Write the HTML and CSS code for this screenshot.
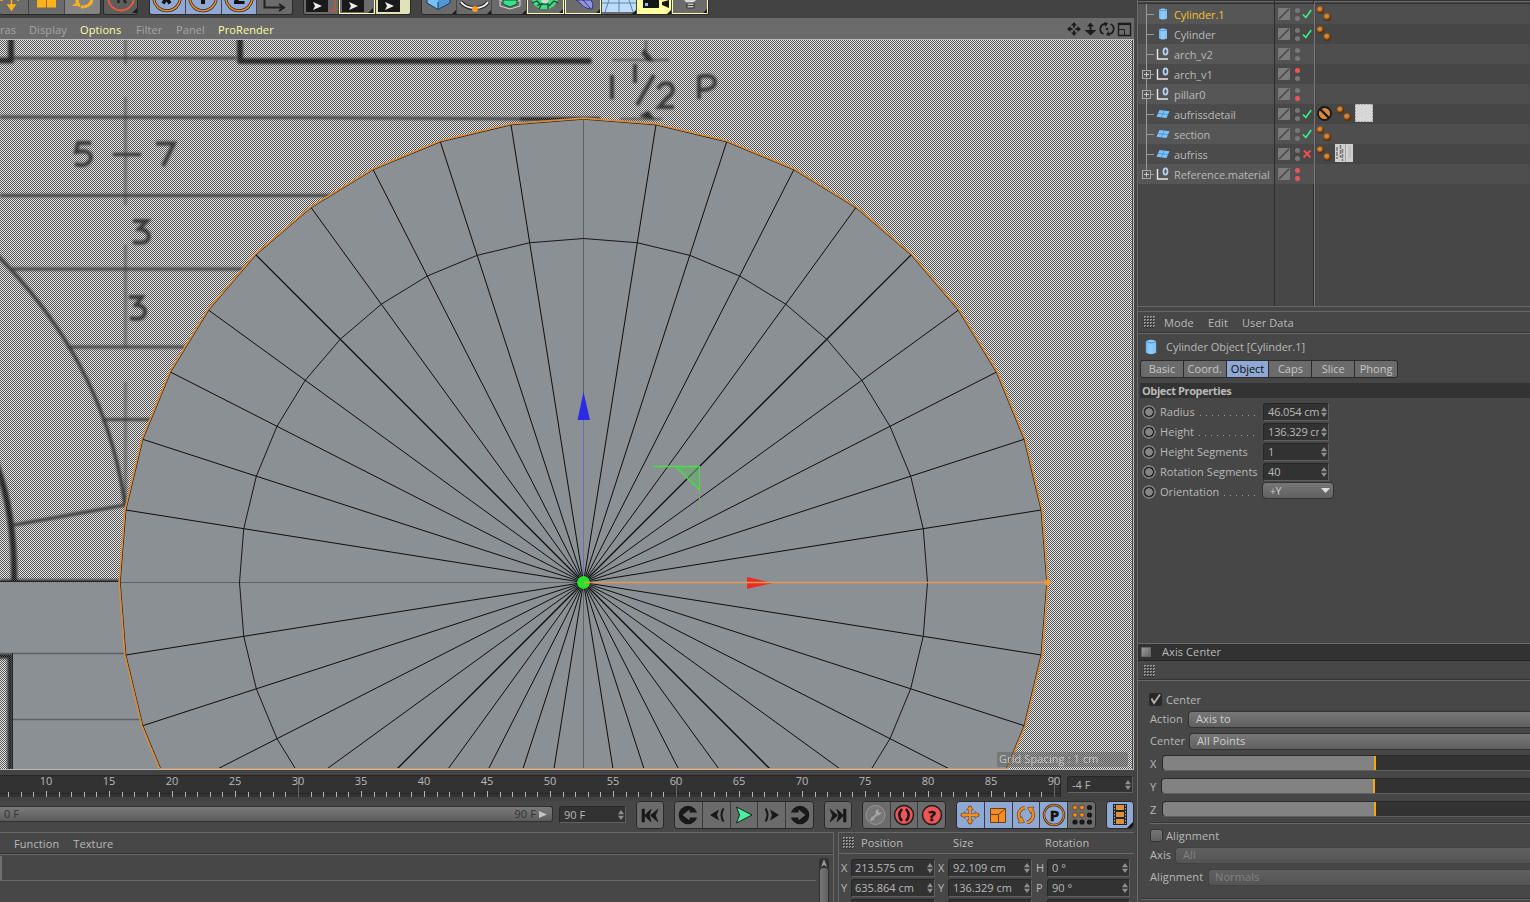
FILE: index.html
```html
<!DOCTYPE html>
<html lang="en">
<head>
<meta charset="utf-8">
<title>Cylinder.1</title>
<link rel="stylesheet" href="styles.css">
</head>
<body>
<svg class="defs" width="0" height="0">
  <defs>
    <linearGradient id="cyl" x1="0" x2="1"><stop offset="0" stop-color="#6fb4ee"/><stop offset=".4" stop-color="#93cdff"/><stop offset="1" stop-color="#7cc0f8"/></linearGradient>
    <radialGradient id="ball" cx=".4" cy=".35"><stop offset="0" stop-color="#e89848"/><stop offset=".6" stop-color="#bb6f22"/><stop offset="1" stop-color="#5a3210"/></radialGradient>
    <symbol id="i-cyl" viewBox="0 0 10 14"><path d="M1 2.500Q5 .3 9 2.500V11.500Q5 13.700 1 11.500Z" fill="url(#cyl)"/><path d="M1 2.800Q5 4.800 9 2.800" fill="none" stroke="#4c93cf" stroke-width=".8"/></symbol>
    <symbol id="i-null" viewBox="0 0 14 14"><path d="M1.500 2V12H12" fill="none" stroke="#e8e8e8" stroke-width="1.400"/><ellipse cx="9.500" cy="4.500" rx="2" ry="3.200" fill="none" stroke="#b4d6f8" stroke-width="1.700"/></symbol>
    <symbol id="i-plane" viewBox="0 0 14 10"><path d="M3.500 1L13.500 2.200L10.500 9L.5 7.800Z" fill="#7cc3ff"/><path d="M8.300 1.600L5.400 8.300M2 4.400L12 5.600" stroke="#4688bd" stroke-width=".7"/></symbol>
    <symbol id="i-balls" viewBox="0 0 16 16"><circle cx="4.500" cy="4" r="3.700" fill="url(#ball)"/><circle cx="11.400" cy="11.200" r="3.900" fill="url(#ball)"/></symbol>
    <symbol id="i-check" viewBox="0 0 10 10"><path d="M1 5.500L3.800 8.500L9.200 1" fill="none" stroke="#3cf08c" stroke-width="1.500"/></symbol>
    <symbol id="i-cross" viewBox="0 0 10 10"><path d="M2 1.500L8.500 8.500M8.500 1.500L1.500 8.500" fill="none" stroke="#ee4f4f" stroke-width="1.900"/></symbol>
    <symbol id="i-spin" viewBox="0 0 6 10"><path d="M3 0L6 4.300H0ZM3 10L6 5.700H0Z" fill="#8f8f8f"/></symbol>
    <symbol id="i-x" viewBox="0 0 36 14"><circle cx="17" cy="-2.500" r="13.300" fill="none" stroke="#2a2a2a" stroke-width="3"/><circle cx="17" cy="-2.500" r="13.300" fill="none" stroke="#ee8a25" stroke-width="1.500"/></symbol>
    <symbol id="i-clap" viewBox="0 0 36 14"><path d="M2 0H24V12H2Z" fill="#191919"/><path d="M9 2L18 6L9 10L11 6Z" fill="#eee"/></symbol>
    <pattern id="dither" width="2" height="2" patternUnits="userSpaceOnUse"><path d="M0 0h1v1h-1zM1 1h1v1h-1z" fill="#505050" shape-rendering="crispEdges"/></pattern>
    <filter id="soft" x="-5%" y="-5%" width="110%" height="110%"><feGaussianBlur stdDeviation="1.1"/></filter>
  </defs>
</svg>
<div class="app">
  <main class="left">
    <div class="toolbar">
      <div class="group g1">
        <span class="tb w28"><svg width="28" height="14"><path d="M11.500 0V5H8L11.500 10L15 5H11.500M3 0H0M19 0H17" fill="#ffb21c" stroke="#ffb21c" stroke-width="1.500"/></svg></span>
        <span class="tb"><svg width="36" height="14"><path d="M8 0H27V7.500H8Z" fill="#ffb21c"/><path d="M17.500 0V8" stroke="#a06a00"/></svg></span>
        <span class="tb hi"><svg width="36" height="14"><path d="M12 0Q12 4 15 6M27 0C26 5 21 7 16 7" fill="none" stroke="#ffb21c" stroke-width="3"/><path d="M7 6H14V0Z" fill="#ffb21c"/></svg></span>
      </div>
      <div class="group g2"><span class="tb dk"><svg width="34" height="14"><circle cx="17" cy="-2.500" r="13" fill="none" stroke="#ee5a38" stroke-width="1.800"/><path d="M14.500 0V3M20 0L22 3" stroke="#222" stroke-width="2.500"/><path d="M33 8V13H28Z" fill="#1c1c1c"/></svg></span></div>
      <div class="group g3">
        <span class="tb blue"><svg width="35" height="14"><use href="#i-x" width="36" height="14"/><path d="M13 3.500L16.500 -2L20 3.500" fill="none" stroke="#111" stroke-width="3.500"/></svg></span>
        <span class="tb blue"><svg width="36" height="14"><use href="#i-x" width="36" height="14"/><path d="M17 0V4" stroke="#111" stroke-width="4"/></svg></span>
        <span class="tb blue"><svg width="36" height="14"><use href="#i-x" width="36" height="14"/><path d="M12 2.500H22.500M13 2L17 -2" stroke="#111" stroke-width="3"/></svg></span>
        <span class="tb"><svg width="36" height="14"><path d="M7.500 0V7.500H27M22 4L27 7.500L22 11" fill="none" stroke="#222" stroke-width="2"/></svg></span>
      </div>
      <div class="group g4">
        <span class="tb"><svg width="34" height="14"><use href="#i-clap" width="36" height="14"/><path d="M25 11H31V0" fill="none" stroke="#ba5840" stroke-width="1.500"/></svg></span>
        <span class="tb cream"><svg width="34" height="14"><use href="#i-clap" width="36" height="14"/><path d="M33 8V13H28Z" fill="#1c1c1c"/></svg></span>
        <span class="tb pale"><svg width="36" height="14"><use href="#i-clap" width="36" height="14"/></svg></span>
      </div>
      <div class="group g5">
        <span class="tb tri"><svg width="35" height="14"><path d="M5 0H28V3L16 9.500L5 3Z" fill="#79c0f6"/><path d="M16 0V9.500L28 3V0Z" fill="#5298d6"/><path d="M5 0V3L16 9.500L28 3V0M16 2V9" fill="none" stroke="#143d60"/></svg></span>
        <span class="tb tri"><svg width="36" height="14"><path d="M4 2C10 10 26 10 31 2" fill="none" stroke="#222" stroke-width="4"/><path d="M4 2C10 10 26 10 31 2" fill="none" stroke="#f3f3f3" stroke-width="2"/><circle cx="18" cy="9" r="3" fill="#ff9420"/></svg></span>
        <span class="tb tri"><svg width="36" height="14"><path d="M8 0L18 5.500L28 0V6L18 9L8 6Z" fill="none" stroke="#d8d8d8"/><path d="M11 0H25V4L18 7L11 4Z" fill="#3ce08a" stroke="#145332"/></svg></span>
        <span class="tb tri cream"><svg width="34" height="14"><path d="M4 0H30L26 6L21 9H12L7 6Z" fill="#40dd88"/><path d="M4 3L9 1L13 5L11 9M13 4H20V9M21 6L26 1L30 3M9 6L12 4" fill="none" stroke="#174a2d" stroke-width="1.300"/><circle cx="17" cy="0" r="3.500" fill="#cfd8d2"/></svg></span>
        <span class="tb tri cream"><svg width="34" height="14"><path d="M10 0H25L27 4L26 9C20 9 17 6 14 3Z" fill="#9096e6" stroke="#30346c"/><path d="M17 0L24 8" stroke="#30346c"/></svg></span>
        <span class="tb tri"><svg width="36" height="14"><path d="M0 0H34V12H0Z" fill="#bcdcfb"/><path d="M17 0V12M0 3H34M7 0L3 12M27 0L31 12" fill="none" stroke="#5f84a8"/></svg></span>
        <span class="tb tri lemon"><svg width="35" height="14"><path d="M6 0H22V8H6ZM25 2L32 0V8L25 5Z" fill="#151515"/><path d="M8 3H11V6H8Z" fill="#8fc4f6"/></svg></span>
        <span class="tb tri cream"><svg width="34" height="14"><path d="M11 0H23L20 3H14Z" fill="#d8d8d8"/><path d="M14 3H21V8H14Z" fill="#c2c2c2" stroke="#333"/><path d="M14 5.500H21" stroke="#444"/></svg></span>
      </div>
    </div>
    <nav class="viewmenu">
      <span class="m0">ras</span><span class="m1">Display</span><span class="m2 on">Options</span><span class="m3">Filter</span><span class="m4">Panel</span><span class="m5 on">ProRender</span>
      <svg class="nav" width="66" height="16" viewBox="0 0 66 16">
        <path d="M7 0L10 3.500H8V5.500H6V3.500H4ZM7 14L10 10.500H8V8.500H6V10.500H4ZM0 7L3.500 4V6H5.500V8H3.500V10ZM14 7L10.500 4V6H8.500V8H10.500V10Z" fill="#1c1c1c"/>
        <path d="M23.500 0.500L27 4.500H24.500V8H29.500L23.500 13.500L17.500 8H22.500V4.500H20Z" fill="#1c1c1c"/>
        <path d="M36.500 12A5.200 5.200 0 0 1 38.500 2M43.500 2A5.200 5.200 0 0 1 41.500 12" fill="none" stroke="#1c1c1c" stroke-width="1.800"/><path d="M37 0L41 1L38.500 5ZM43 14L39 13L41.500 9Z" fill="#1c1c1c"/><circle cx="40" cy="7" r="1.300" fill="#1c1c1c"/>
        <path d="M51.500 1.500H63.500V13.500H51.500Z" fill="none" stroke="#1c1c1c" stroke-width="1.400"/><path d="M51 2H64" stroke="#1c1c1c" stroke-width="2.200"/><path d="M51.500 7.500H57.500V13.500" fill="none" stroke="#1c1c1c"/>
      </svg>
    </nav>
    <div class="viewport">
      <svg width="1132" height="729" viewBox="0 40 1132 729">
        <rect y="40" width="1132" height="729" fill="#e9e9e9"/>
        <g filter="url(#soft)" fill="none" stroke="#282828">
          <path d="M0 60.500H11V36M240 36V61H589" stroke="#101010" stroke-width="6" stroke-linecap="round" stroke-linejoin="round"/>
          <path d="M14 58H236M0 117L300 117.500L560 119M0 195.500H335M10 269H245M67 347H185M102 419.500H152" stroke-width="3" opacity=".9"/>
          <path d="M520 119H600" stroke="#111" stroke-width="4"/>
          <path d="M125.500 36V64M125.500 97V205M125.500 245V346M125.500 382V505" stroke-width="3" opacity=".5"/>
          <path d="M-10 248Q105 360 125 505L14 525" stroke-width="3.300"/>
          <path d="M-14 440Q16 500 14 585" stroke="#101010" stroke-width="6"/>
          <path d="M0 581H122" stroke="#111" stroke-width="3"/>
          <path d="M113 154.500H141" stroke-width="3.400"/>
          <path d="M91 143H78L76 152Q91 149 91 158Q88 168 75 164M156 143.500H174L163 166M133 221H147L139 229Q149 230 149 237Q147 245 133 242M129 297H142L136 305Q146 306 145 313Q143 321 130 318" stroke-width="4"/>
          <path d="M612 75V99M635 64V83M654 75L637 105M658 89Q662 81 670 84Q677 91 667 98L659 107H674M699 99V77Q715 73 715 83Q714 90 699 90" stroke-width="4"/>
          <path d="M612 60H669M646 40V60M620 119H662" stroke-width="2" opacity=".7"/><path d="M644 49L654 61H648L642 54ZM640 116L648 111L655 120Z" fill="#151515"/>
          <path d="M-5 656H10V775" stroke="#111" stroke-width="5"/>
        </g>
        <rect y="40" width="1132" height="729" fill="url(#dither)"/>
        <path d="M0 582H122L144 725L162 780H12.500V653.500H0Z" fill="#8b9095"/>
        <path d="M0 653.500H126M12.500 719.500H142" stroke="#5d6164" stroke-width="1.500" fill="none"/>
        <path d="M0 581.500H120M12.500 653V769" stroke="#1f2122" fill="none"/>
        <g id="disc"></g>
      </svg>
      <span class="spacing">Grid Spacing : 1 cm</span>
    </div>
    <section class="timeline">
      <svg class="ruler" width="1061" height="22" id="ruler"></svg>
      <div class="field f66"><span>-4 F</span><svg class="spin"><use href="#i-spin"/></svg></div>
    </section>
    <section class="transport">
      <div class="range"><span>0 F</span><span class="end">90 F</span><svg width="10" height="9"><path d="M1 1L9 4.500L1 8Z" fill="#c4c4c4"/></svg></div>
      <div class="field f67"><span>90 F</span><svg class="spin"><use href="#i-spin"/></svg></div>
      <div class="btns b1"><i><svg width="26" height="26"><path d="M5 7H7.500V20H5ZM7.500 13.500L14 7L12.500 13.500L14 20ZM13.500 13.500L21 7L18.500 13.500L21 20Z" fill="#181818" stroke="#181818" stroke-width=".6"/></svg></i></div>
      <div class="btns b2">
        <i><svg width="26" height="26"><circle cx="13" cy="13" r="9.300" fill="#181818"/><path d="M7.500 13L14.500 7.500V10.500H24V15.500H14.500V18.500Z" fill="#6b6b6b"/></svg></i>
        <i><svg width="26" height="26"><path d="M7 13L16 7.500L14 13L16 18.500Z" fill="#181818"/><path d="M20.500 6.500Q16.500 13 20.500 19.500" fill="none" stroke="#181818" stroke-width="2"/></svg></i>
        <i><svg width="26" height="26"><path d="M5.500 5L21 13L5.500 21L8.500 13Z" fill="#4af09a" stroke="#202020"/></svg></i>
        <i><svg width="26" height="26"><path d="M20 13L11 7.500L13 13L11 18.500Z" fill="#181818"/><path d="M6.500 6.500Q10.500 13 6.500 19.500" fill="none" stroke="#181818" stroke-width="2"/></svg></i>
        <i><svg width="26" height="26"><circle cx="13" cy="13" r="9.300" fill="#181818"/><path d="M18.500 13L11.500 7.500V10.500H2V15.500H11.500V18.500Z" fill="#6b6b6b"/></svg></i>
      </div>
      <div class="btns b3"><i><svg width="26" height="26"><path d="M21 7H18.500V20H21ZM18.500 13.500L12 7L13.500 13.500L12 20ZM12.500 13.500L5 7L7.500 13.500L5 20Z" fill="#181818" stroke="#181818" stroke-width=".6"/></svg></i></div>
      <div class="btns b4">
        <i><svg width="26" height="26"><circle cx="12.500" cy="13" r="9.500" fill="#777" stroke="#979797"/><path d="M12.500 9.500L15 6.500L15.500 10.500L19 10.500L16 13.500L13 13Z" fill="#a8a8a8"/><path d="M14 12L7.500 18.500M8.500 15L11 18" stroke="#a4a4a4" stroke-width="1.800"/></svg></i>
        <i><svg width="26" height="26"><circle cx="13" cy="13" r="9.500" fill="#ee5556" stroke="#1d1d1d" stroke-width="1.500"/><path d="M11 7Q5.500 13 11 19M15 7Q20.500 13 15 19" fill="none" stroke="#181818" stroke-width="2.500"/></svg></i>
        <i><svg width="26" height="26"><circle cx="13" cy="13" r="9.500" fill="#ee5556" stroke="#1d1d1d" stroke-width="1.500"/><text x="13" y="18.500" text-anchor="middle" class="ic">?</text></svg></i>
      </div>
      <div class="btns b5">
        <i class="bl"><svg width="26" height="26"><path d="M13 4V22M4 13H22" stroke="#63401c" stroke-width="3"/><path d="M13 3.500L16.500 8H9.500ZM13 22.500L16.500 18H9.500ZM3.500 13L8 9.500V16.500ZM22.500 13L18 9.500V16.500Z" fill="#f58d22" stroke="#63401c" stroke-width=".6"/><path d="M13 5V21M5 13H21" stroke="#f58d22" stroke-width="2"/></svg></i>
        <i class="bl"><svg width="26" height="26"><path d="M5.500 6.500H20.500V20.500H5.500Z" fill="#f58d22" stroke="#63401c"/><path d="M5.500 12.500H13.500V20.500M13.500 12.500L20 7" fill="none" stroke="#63401c"/></svg></i>
        <i class="bl"><svg width="26" height="26"><path d="M8 18.500A7.500 7.500 0 0 1 12 5.700M18 7.500A7.500 7.500 0 0 1 14 20.300" fill="none" stroke="#63401c" stroke-width="3.500"/><path d="M5 21L11.500 20.500L8.500 14.500ZM21 5L14.500 5.500L17.500 11.500Z" fill="#f58d22" stroke="#63401c" stroke-width=".6"/><path d="M8 18.500A7.500 7.500 0 0 1 12 5.700M18 7.500A7.500 7.500 0 0 1 14 20.300" fill="none" stroke="#f58d22" stroke-width="2.200"/></svg></i>
        <i class="bl"><svg width="26" height="26"><circle cx="13" cy="13" r="10" fill="none" stroke="#453522" stroke-width="2.500"/><circle cx="13" cy="13" r="10" fill="none" stroke="#ee8a25" stroke-width="1"/><text x="13.500" y="18.500" text-anchor="middle" class="ic">P</text></svg></i>
        <i><svg width="26" height="26" fill="#171717"><g fill="#f58d22" stroke="#4a2a08" stroke-width=".6"><circle cx="6" cy="5.500" r="2.300"/><circle cx="13" cy="5.500" r="2.300"/><circle cx="6" cy="13" r="2.300"/><circle cx="13" cy="13" r="2.300"/></g><circle cx="20.500" cy="5.500" r="2.600"/><circle cx="20.500" cy="13" r="2.600"/><circle cx="6" cy="20" r="2.600"/><circle cx="13" cy="20" r="2.600"/><circle cx="20.500" cy="20" r="2.600"/></svg></i>
      </div>
      <div class="btns b6"><i class="bl"><svg width="26" height="26"><path d="M6 2H20V23H6Z" fill="#27231d"/><path d="M9 3H17V8H9ZM9 10H17V15H9ZM9 17H17V22H9Z" fill="#dc8f3c"/><path d="M7.500 3V22M18.500 3V22" stroke="#8ea9d4" stroke-dasharray="1.500 1.500"/><path d="M26 20V26H20Z" fill="#111"/></svg></i></div>
    </section>
    <div class="bottom">
      <section class="materials">
        <nav><span>Function</span><span>Texture</span></nav>
        <div class="matbody"><div class="strip"></div><div class="scroll"><svg width="10" height="10"><path d="M5 1L8 9L5 7L2 9Z" fill="#999"/></svg><b></b></div></div>
      </section>
      <section class="coords">
        <header><span class="grip"></span><span class="c1">Position</span><span class="c2">Size</span><span class="c3">Rotation</span></header>
        <div class="crow"><em>X</em><div class="field"><span>213.575 cm</span><svg class="spin"><use href="#i-spin"/></svg></div><em>X</em><div class="field"><span>92.109 cm</span><svg class="spin"><use href="#i-spin"/></svg></div><em>H</em><div class="field"><span>0 °</span><svg class="spin"><use href="#i-spin"/></svg></div></div>
        <div class="crow"><em>Y</em><div class="field"><span>635.864 cm</span><svg class="spin"><use href="#i-spin"/></svg></div><em>Y</em><div class="field"><span>136.329 cm</span><svg class="spin"><use href="#i-spin"/></svg></div><em>P</em><div class="field"><span>90 °</span><svg class="spin"><use href="#i-spin"/></svg></div></div>
        <div class="crow"><em></em><div class="field"></div><em></em><div class="field"></div><em></em><div class="field"></div></div>
      </section>
    </div>
  </main>
  <aside class="right">
    <section class="objects" id="objects"></section>
    <section class="attrs">
      <nav><span class="grip"></span><span class="n1">Mode</span><span class="n2">Edit</span><span class="n3">User Data</span></nav>
      <div class="title"><svg width="14" height="18"><use href="#i-cyl" width="14" height="18"/></svg><span>Cylinder Object [Cylinder.1]</span></div>
      <div class="tabs"><span>Basic</span><span>Coord.</span><span class="sel">Object</span><span>Caps</span><span>Slice</span><span>Phong</span></div>
      <h3>Object Properties</h3>
      <div class="prop"><i></i><label>Radius<u></u></label><div class="field"><span>46.054 cm</span><svg class="spin"><use href="#i-spin"/></svg></div></div>
      <div class="prop"><i></i><label>Height<u></u></label><div class="field"><span class="cut">136.329 cm</span><svg class="spin"><use href="#i-spin"/></svg></div></div>
      <div class="prop"><i></i><label>Height Segments</label><div class="field"><span>1</span><svg class="spin"><use href="#i-spin"/></svg></div></div>
      <div class="prop"><i></i><label>Rotation Segments</label><div class="field"><span>40</span><svg class="spin"><use href="#i-spin"/></svg></div></div>
      <div class="prop"><i></i><label>Orientation<u></u></label><div class="drop small"><span>+Y</span><svg width="9" height="5"><path d="M0 0H9L4.500 5Z" fill="#ddd"/></svg></div></div>
    </section>
    <section class="axis">
      <header><b></b>Axis Center</header>
      <div class="gripbar"><span class="grip"></span></div>
      <div class="chk"><svg width="13" height="13"><rect width="13" height="13" rx="2" fill="#282828"/><path d="M2.500 5.500L5 10L11 1.500" fill="none" stroke="#b4b4b4" stroke-width="1.800"/></svg>Center</div>
      <div class="line a1"><label>Action</label><div class="drop">Axis to</div></div>
      <div class="line a2"><label>Center</label><div class="drop">All Points</div></div>
      <div class="line sl"><label>X</label><div class="slider"><b></b></div></div>
      <div class="line sl y"><label>Y</label><div class="slider"><b></b></div></div>
      <div class="line sl"><label>Z</label><div class="slider"><b></b></div></div>
      <hr>
      <div class="chk al"><b></b>Alignment</div>
      <div class="line a3"><label>Axis</label><div class="drop off">All</div></div>
      <div class="line a4"><label>Alignment</label><div class="drop off">Normals</div></div>
      <hr class="last">
    </section>
  </aside>
</div>
<script src="app.js"></script>
</body>
</html>
```
FILE: styles.css
```css
* { box-sizing: border-box; }
body { margin: 0; width: 1530px; height: 902px; overflow: hidden; background: #474747; font: 11px/14px "Open Sans", "Noto Sans", sans-serif; color: #b9b9b9; letter-spacing: .1px; }
svg { display: block; flex: none; }
.defs { position: absolute; }
i, em { font-style: normal; }
span, label { white-space: nowrap; }
.app { display: grid; grid-template-columns: 1137px 393px; height: 902px; }
.left { display: flex; flex-direction: column; min-width: 0; height: 902px; overflow: hidden; }

.toolbar { height: 18px; display: flex; align-items: flex-start; background: #434343; }
.group { display: flex; height: 15px; border: 1px solid #292929; border-top: 0; border-radius: 0 0 3px 3px; gap: 1px; background: #454545; overflow: hidden; }
.tb { position: relative; display: block; height: 14px; background: #6b6b6b; overflow: hidden; flex: 1 1 0; }
.g1 { width: 101px; border-left: 0; } .tb.w28 { flex: 0 0 28px; }
.g2 { width: 35px; margin-left: 2px; } .g3 { width: 144px; margin-left: 11px; }
.g4 { width: 108px; margin-left: 10px; } .g5 { width: 288px; margin-left: 10px; }
.tb.hi { background: #838383; } .tb.dk { background: #5d5d5d; } .tb.blue { background: #8fa9d4; }
.tb.pale { background: #e2e2b8; } .tb.lemon { background: #ffffa0; }
.tb.cream { border: 1px solid #ffffb0; border-top: 0; }
.tb.tri::after { content: ""; position: absolute; right: 0; bottom: 0; border: 2.5px solid; border-color: transparent #1b1b1b #1b1b1b transparent; }

.viewmenu { height: 21px; margin-right: 3px; display: flex; align-items: center; background: #6b6b6b; color: #a6a6a6; padding: 3px 1px 0 0; letter-spacing: .1px; }
.viewmenu .on { color: #ffffa4; }
.m0 { width: 29px; } .m1 { width: 51px; } .m2 { width: 56px; } .m3 { width: 40px; } .m4 { width: 42px; }
.viewmenu .nav { margin-left: auto; }
.viewport { position: relative; height: 731px; width: 1134px; border: solid #b9b9b9; border-width: 1px 1px 1px 0; overflow: hidden; }
.spacing { position: absolute; right: 5px; bottom: 2px; width: 131px; height: 15px; padding-left: 2px; border-radius: 2px; background: rgba(100,100,100,.55); color: #c6c6c6; }

.timeline { display: flex; height: 31px; padding-top: 5px; gap: 6px; background: #434343; }
.ruler { background: #323232; border-right: 1px solid #222; overflow: visible; }
.ruler text { fill: #b9b9b9; letter-spacing: 0; }
.field { position: relative; display: flex; align-items: center; height: 17px; background: #323232; border: solid #272727; border-width: 1px; border-right-color: #606060; border-bottom-color: #606060; border-radius: 3px 0 0 0; padding: 0 1px 0 5px; overflow: hidden; letter-spacing: 0; }
.field span { flex: 1; overflow: hidden; }
.field .cut { margin-right: 2px; }
.spin { width: 6px; height: 10px; }
.f66 { width: 66px; margin-top: 1px; padding-left: 4px; }
.transport { display: flex; align-items: flex-start; height: 31px; }
.range { display: flex; align-items: center; width: 553px; height: 16px; margin-top: 5px; padding: 0 4px 0 4px; border: 1px solid #303030; border-left: 0; border-radius: 0 3px 3px 0; background: linear-gradient(#7a7a7a, #5c5c5c); color: #343434; }
.range .end { margin-left: auto; margin-right: 2px; }
.f67 { width: 67px; margin: 5px 0 0 6px; padding-left: 4px; }
.btns { display: flex; gap: 1px; height: 28px; background: #3b3b3b; border: 1px solid #292929; border-radius: 4px; overflow: hidden; }
.btns i { flex: 1; display: flex; justify-content: center; background: #6b6b6b; }
.btns .bl { background: #8fa9d4; }
.b1 { width: 28px; margin-left: 10px; } .b2 { width: 140px; margin-left: 10px; } .b3 { width: 28px; margin-left: 10px; }
.b4 { width: 84px; margin-left: 10px; } .b5 { width: 140px; margin-left: 10px; } .b6 { width: 28px; margin-left: 10px; }
.ic { font: bold 15px "Open Sans", sans-serif; fill: #111; letter-spacing: 0; stroke: #111; stroke-width: .6px; }

.bottom { display: flex; gap: 4px; height: 70px; }
.materials { width: 834px; border-top: 1px solid #686868; border-right: 1px solid #686868; }
.materials nav { display: flex; gap: 14px; height: 22px; padding: 4px 0 0 14px; border-bottom: 1px solid #686868; box-shadow: 0 -1px #333 inset; }
.matbody { display: flex; justify-content: space-between; height: 47px; padding: 1px 4px 0 0; }
.strip { width: 816px; height: 25px; border-left: 2px solid #6f6f6f; border-bottom: 1px solid #686868; }
.scroll { width: 10px; margin-top: 2px; background: #303030; border-radius: 4px 4px 0 0; }
.scroll b { display: block; width: 8px; margin-left: 1px; height: 40px; background: linear-gradient(90deg, #777, #606060); border-radius: 3px 3px 0 0; }
.coords { width: 296px; border-top: 1px solid #686868; border-left: 1px solid #686868; }
.coords header { display: flex; height: 21px; padding: 3px 0 0 3px; border-bottom: 1px solid #686868; margin-bottom: 5px; }
.grip { width: 12px; height: 12px; background: conic-gradient(#999 25%, #474747 0 50%, #303030 0 75%, #474747 0) 0 0 / 3px 3px; }
.coords header .grip { margin-top: 1px; }
.c1 { margin-left: 7px; width: 92px; } .c2 { width: 92px; }
.crow { display: grid; grid-template-columns: 12px 84px 13px 84px 15px 83px; height: 20px; align-items: start; }
.crow em { padding: 2px 0 0 2px; } .crow em:nth-child(3) { padding-left: 3px; } .crow em:nth-child(5) { padding-left: 4px; }
.crow .field { height: 18px; padding-left: 3px; }
.crow .field:nth-child(4) { padding-left: 4px; } .crow .field:nth-child(6) { padding-left: 4px; }

.right { display: flex; flex-direction: column; height: 902px; overflow: hidden; background: #474747; border-left: 1px solid #686868; }
.objects { height: 307px; border-top: 1px solid #333; padding-top: 3px; border-bottom: 1px solid #686868; background: linear-gradient(90deg, transparent 136px, #2c2c2c 136px 137px, transparent 137px 175px, #2c2c2c 175px 176px, #777 176px 177px, transparent 177px), linear-gradient(#686868 0 1px, #474747 1px 2px, #303030 2px 3px, transparent 3px); }
.orow { display: grid; grid-template-columns: 136px 39px 214px; column-gap: 1px; height: 20px; }
.orow .oname { display: flex; align-items: center; background: #4b4b4b; }
.orow .oflag { display: flex; align-items: center; background: #484848; padding-left: 3px; }
.orow .otags { display: flex; align-items: center; background: #464646; margin-left: 1px; }
.orow:nth-child(odd) .oname { background: #565656; } .orow:nth-child(odd) .oflag { background: #525252; } .orow:nth-child(odd) .otags { background: #4e4e4e; }
.oname span { padding-top: 2px; margin-left: 4px; letter-spacing: -.08px; }
.oname .yel { color: #f5c02c; }

.attrs { height: 332px; margin-top: 4px; border-top: 1px solid #686868; }
.attrs nav { display: flex; height: 22px; padding: 4px 0 0 5px; border-bottom: 1px solid #686868; box-shadow: 0 -1px #333 inset; }
.n1 { margin-left: 9px; width: 44px; } .n2 { width: 34px; }
.title { display: flex; align-items: center; height: 26px; padding-left: 6px; gap: 8px; }
.title span { letter-spacing: -.03px; }
.tabs { display: flex; width: 258px; height: 18px; margin: 0 0 5px 2px; border: 1px solid #2b2b2b; border-radius: 3px; background: #2b2b2b; gap: 1px; overflow: hidden; }
.tabs span { flex: 1 1 0; text-align: center; background: #6b6b6b; color: #c6c6c6; line-height: 16px; letter-spacing: 0; }
.tabs .sel { background: #8fa9d4; color: #0a0a0a; }
.attrs h3 { margin: 0 0 4px 2px; padding-left: 2px; height: 15px; background: #333; font-size: 11px; line-height: 16px; letter-spacing: -.4px; }
.prop { display: flex; align-items: flex-start; height: 20px; padding-left: 4px; }
.prop i { flex: none; width: 14px; height: 14px; margin-top: 3px; border-radius: 50%; background: radial-gradient(circle, #858585 0 3.5px, #262626 4px 5px, #7c7c7c 5.6px 6.6px, #555 7px); }
.prop label { flex: none; display: flex; width: 107px; padding: 3px 8px 0 4px; letter-spacing: .05px; }
.prop u { flex: 1; margin: 0 0 3px 5px; background: repeating-linear-gradient(90deg, #999 0 1px, transparent 1px 6px) 0 100% / 100% 1px no-repeat; }
.prop .field { width: 66px; margin-top: 1px; padding: 0 1px 0 4px; height: 18px; letter-spacing: -.15px; }
.drop { display: flex; align-items: center; height: 17px; padding-left: 6px; border: 1px solid #333; border-radius: 4px; background: linear-gradient(#777, #606060); color: #cfcfcf; }
.small { justify-content: space-between; width: 72px; padding: 0 3px 0 7px; margin-left: -1px; }
.small span { font-size: 10px; }

.axis { border-top: 1px solid #686868; flex: 1; }
.axis header { display: flex; height: 17px; align-items: center; background: #323232; border-bottom: 1px solid #262626; padding-left: 3px; gap: 11px; }
.axis header b { width: 10px; height: 10px; background: linear-gradient(135deg, #999, #666); border: 1px solid #666; }
.gripbar { height: 20px; border-bottom: 1px solid #686868; padding: 4px 0 0 5px; box-shadow: 0 -1px #333 inset; }
.gripbar .grip { display: block; }
.chk { display: flex; align-items: center; height: 15px; gap: 4px; margin: 11px 0 3px 11px; }
.chk b { width: 13px; height: 13px; border-radius: 3px; border: 1px solid #353535; background: linear-gradient(#757575, #606060); }
.line { display: flex; align-items: center; padding-left: 12px; height: 18px; }
.line .drop, .slider { flex: 1; border-right: 0; border-radius: 4px 0 0 4px; }
.a1 { margin-bottom: 4px; } .a2 { margin-bottom: 3px; }
.a1 label { width: 38px; } .a1 .drop { padding-left: 7px; } .a2 label { width: 39px; } .a2 .drop { padding-left: 7px; } .a3 label { width: 25px; } .a4 label { width: 58px; }
.sl { height: 19px; margin-bottom: 4px; } .sl label { width: 12px; padding-top: 2px; } .sl.y label { width: 11px; }
.slider { height: 16px; background: #323232; border: solid #2a2a2a; border-width: 1px 0 1px 1px; border-bottom-color: #606060; overflow: hidden; }
.slider b { display: block; width: 213px; height: 14px; background: #828282; border-right: 2px solid #f6a80b; }
.axis hr { margin: 0 0 0 12px; border: 0; height: 2px; background: linear-gradient(#383838 50%, #686868 50%); }
.chk.al { margin: 4px 0 3px 12px; gap: 3px; }
.off { color: #828282; background: linear-gradient(#606060, #545454); border-color: #414141; }
.a3 { margin-bottom: 4px; } .a3 .drop { padding-left: 7px; }
.axis hr.last { margin: 12px 0 0 4px; }
```
FILE: app.js
```js
const NS = 'http://www.w3.org/2000/svg';
function add(parent, tag, attrs, text) {
  const node = document.createElementNS(NS, tag);
  for (const key in attrs) node.setAttribute(key, attrs[key]);
  if (text !== undefined) node.textContent = text;
  parent.appendChild(node);
}

// Cylinder seen from above: 40 rotation segments around the centre.
const disc = document.getElementById('disc');
const cx = 583.5, cy = 582.5, outer = 464, inner = 344, count = 40;
const ring = r => Array.from({ length: count }, (_, i) => {
  const a = i * 2 * Math.PI / count;
  return [cx + r * Math.sin(a), cy - r * Math.cos(a)];
});
const rim = ring(outer);
add(disc, 'polygon', { points: rim.join(' '), fill: '#8b9095' });
rim.forEach(([x, y], i) => {
  const axial = i % 10 === 0;
  add(disc, 'path', { d: `M${cx} ${cy}L${x} ${y}`, stroke: axial ? '#5d6164' : '#0c0d0e', 'stroke-width': i % 10 === 5 ? 1.3 : 1 });
});
add(disc, 'polygon', { points: ring(inner).join(' '), fill: 'none', stroke: '#16181a' });
add(disc, 'polygon', { points: ring(outer - 0.7).join(' '), fill: 'none', stroke: '#3a2a18' });
add(disc, 'polygon', { points: ring(outer + 0.4).join(' '), fill: 'none', stroke: '#da8c3a', 'stroke-width': 1.6 });
add(disc, 'path', { d: 'M160 768.5H1009', stroke: '#d09358' });
add(disc, 'path', { d: 'M583.5 582V418', stroke: '#6a70b4' });
add(disc, 'path', { d: 'M577.5 420L583.5 392L590 420Z', fill: '#2b2be6' });
add(disc, 'path', { d: 'M676 466.500H699.500V490Z', fill: '#6cb070', 'fill-opacity': .6 });
add(disc, 'path', { d: 'M653 466.500H699.500M676 467L699.500 490', stroke: '#45e045', 'stroke-width': 1.3, fill: 'none' });
add(disc, 'path', { d: 'M699.500 466V491', stroke: '#45e045' });
add(disc, 'path', { d: 'M699.500 491V514', stroke: '#7ba67c' });
add(disc, 'circle', { cx: 583.5, cy: 582.5, r: 6.5, fill: '#2ae12a' });
add(disc, 'path', { d: 'M747 577L773 583L747 589Z', fill: '#e82c24' });
add(disc, 'path', { d: 'M584 582.500H1047', stroke: '#e39a50', 'stroke-width': 1.6 });
add(disc, 'circle', { cx: 1047.5, cy: 582.5, r: 3, fill: '#f29a32' });

// Timeline ruler, 12.6 px per frame.
const ruler = document.getElementById('ruler');
add(ruler, 'path', { d: 'M0 .5H1061M0 18.500H1061', stroke: '#262626' });
for (let f = 7; f <= 90; f++) {
  const x = Math.round(46 + (f - 10) * 12.6) + 0.5;
  add(ruler, 'path', { d: `M${x} ${f % 5 ? 17 : 16}V22`, stroke: '#b5b5b5' });
  if (f % 30 === 0) add(ruler, 'path', { d: `M${x} 2V22`, stroke: '#666' });
  if (f % 5 === 0) add(ruler, 'text', { x: x - 0.5, y: 10, 'text-anchor': 'middle' }, f);
}

// Object manager rows.
const objects = [
  ['Cylinder.1', 'cyl', 0, 'gg', 'check', ['balls']],
  ['Cylinder', 'cyl', 0, 'gg', 'check', ['balls']],
  ['arch_v2', 'null', 0, 'gg', '', []],
  ['arch_v1', 'null', 1, 'rg', '', []],
  ['pillar0', 'null', 1, 'gr', '', []],
  ['aufrissdetail', 'plane', 0, 'gg', 'check', ['stop', 'balls', 'paper']],
  ['section', 'plane', 0, 'gg', 'check', ['balls']],
  ['aufriss', 'plane', 0, 'gg', 'cross', ['balls', 'streak']],
  ['Reference.material', 'null', 1, 'rr', '', []]
];
const tags = {
  balls: '<svg width="16" height="16" style="margin-right:3px"><use href="#i-balls"/></svg>',
  stop: '<svg width="17" height="17" style="margin-right:3px"><circle cx="8.500" cy="7.500" r="6.500" fill="#d98a3c" stroke="#171717" stroke-width="1.800"/><path d="M4 3L13 12" stroke="#171717" stroke-width="2.400"/></svg>',
  paper: '<svg width="18" height="20"><rect y="0" width="18" height="18" fill="#d8d8d8"/><path d="M.5 0V18M17.500 0V18M0 .5H18M0 17.500H18" stroke="#aaa" stroke-dasharray="2 1"/><path d="M3 3V15M7 2V13M11 4V16M15 3V14" stroke="#c2c2c2" stroke-dasharray="1 2"/></svg>',
  streak: '<svg width="18" height="20"><rect width="18" height="18" fill="#cfcfcf"/><path d="M2 3V15M5.500 1V14M7.500 5V17" stroke="#777" stroke-width="1.500" stroke-dasharray="4 1"/><path d="M10.500 0V18M15 2V14" stroke="#aaa"/></svg>'
};
const dot = c => c === 'r' ? '#ee5555' : '#777';
const sizes = { cyl: [10, 14, 2], null: [14, 14, 0], plane: [14, 12, 0] };
document.getElementById('objects').innerHTML = objects.map(([name, icon, parent, dots, state, tagList], i) => {
  const [w, h, pad] = sizes[icon];
  const last = i === objects.length - 1;
  return `<div class="orow"><div class="oname">
    <svg width="18" height="20"><path d="M8.500 0V${last ? 10 : 20}M8.500 10.500H16" stroke="#999" fill="none"/>${parent ? '<rect x="4.500" y="6.500" width="8" height="8" fill="#555" stroke="#aaa"/><path d="M6 10.500H11M8.500 8V13" stroke="#ccc"/>' : ''}</svg>
    <svg width="${w}" height="${h}" style="margin:0 ${pad}px 0 ${pad}px"><use href="#i-${icon}"/></svg>
    <span class="${i ? '' : 'yel'}">${name}</span></div>
    <div class="oflag"><svg width="24" height="20"><rect x="0" y="4" width="12" height="12" rx="1" fill="#7b7b7b"/><path d="M1 15L11 5" stroke="#444" stroke-width="1.400"/><circle cx="19.500" cy="6.500" r="2.500" fill="${dot(dots[0])}"/><circle cx="19.500" cy="14.500" r="2.500" fill="${dot(dots[1])}"/></svg>
    ${state ? `<svg width="10" height="10"><use href="#i-${state}"/></svg>` : ''}</div>
    <div class="otags">${tagList.map(t => tags[t]).join('')}</div></div>`;
}).join('');
```
